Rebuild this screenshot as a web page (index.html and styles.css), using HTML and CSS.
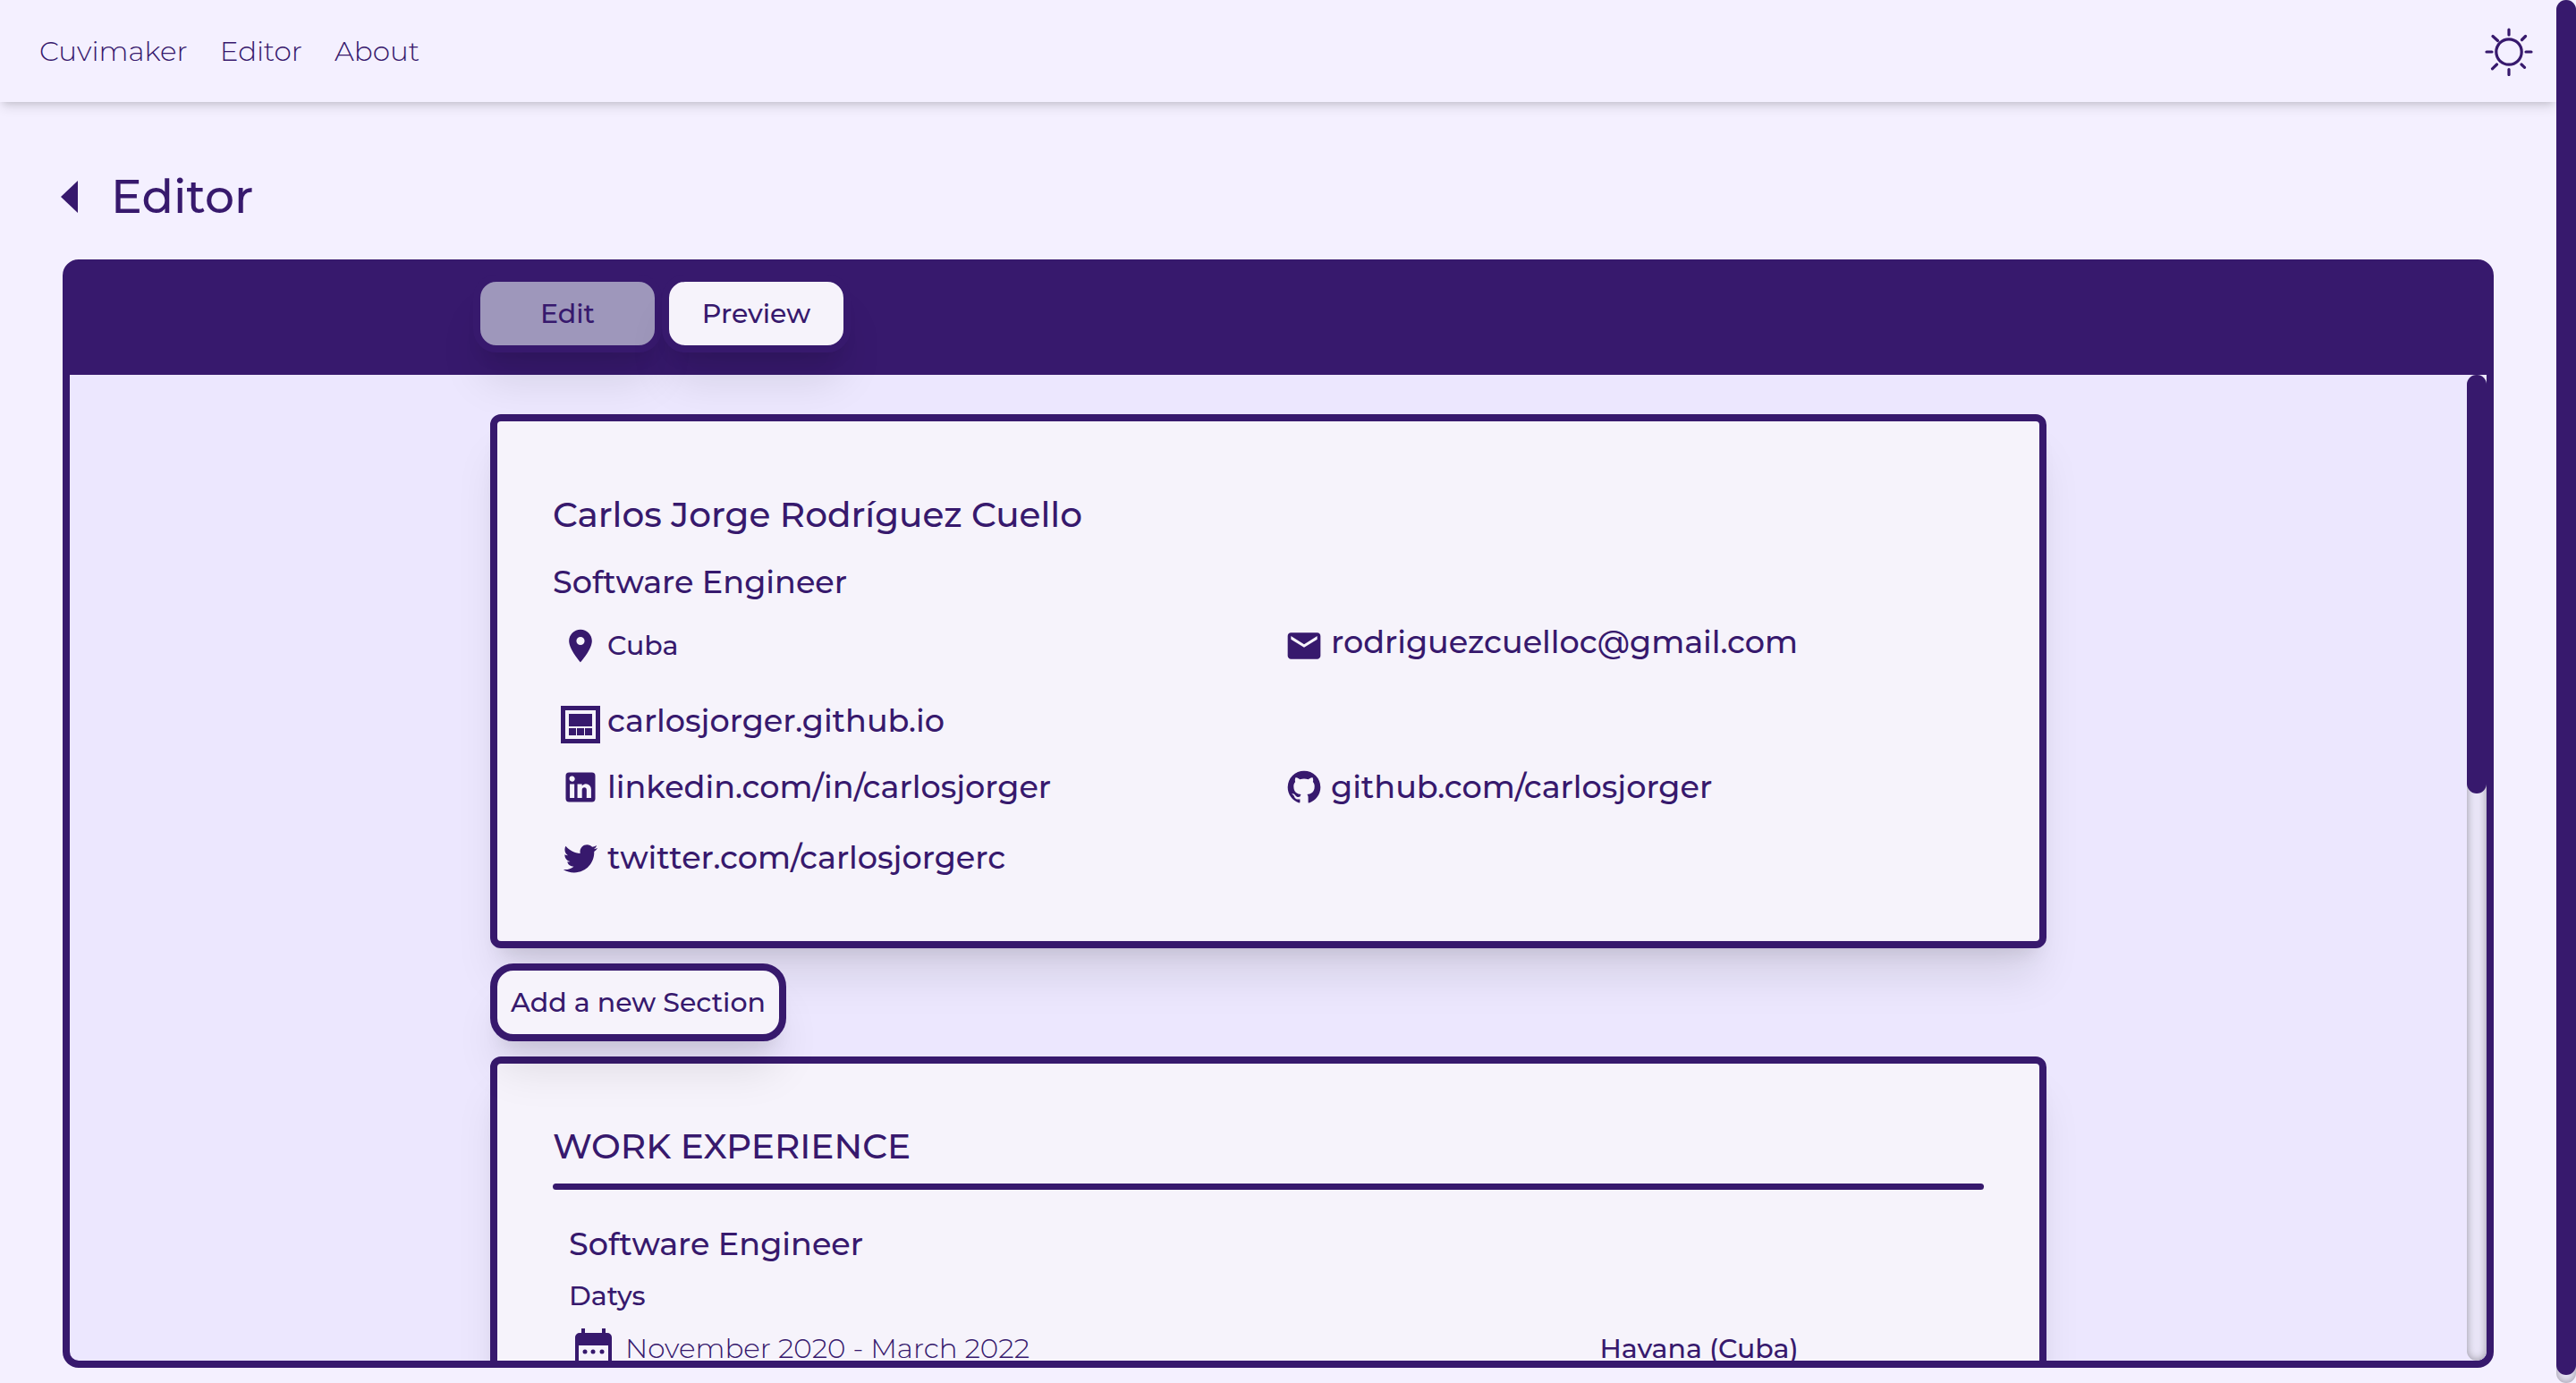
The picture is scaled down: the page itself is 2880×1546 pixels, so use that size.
FILE: index.html
```html
<!DOCTYPE html>
<html lang="en">
<head>
<meta charset="utf-8">
<meta name="viewport" content="width=device-width, initial-scale=1">
<title>Cuvimaker</title>
<link rel="stylesheet" href="styles.css">
</head>
<body class="app">
  <div class="page">
    <header class="topbar">
      <nav class="nav">
        <a class="nav-link" href="#home">Cuvimaker</a>
        <a class="nav-link" href="#editor">Editor</a>
        <a class="nav-link" href="#about">About</a>
      </nav>
      <button class="theme-toggle" type="button" aria-label="Toggle theme">
        <svg class="theme-icon" viewBox="-27 -27 54 54" fill="none" stroke="currentColor" stroke-width="3.2" stroke-linecap="round">
          <circle cx="0" cy="0" r="14.2"/>
          <path d="M0-25v6M0 19.500v6M-25 0h6M19 0h6M-18-17.500l5.500 5M14.500-13.500l4-4M-13.500 14l-5 4.800M14 14l3.500 3.300"/>
        </svg>
      </button>
    </header>
    <main class="editor">
      <div class="title-row">
        <a class="back" href="#home" aria-label="Back"><svg class="back-icon" viewBox="0 0 20 38"><path fill="currentColor" d="M0 19L19 1v36z"/></svg></a>
        <h1 class="title">Editor</h1>
      </div>
      <section class="panel">
        <div class="panel-head">
          <div class="tabs">
            <button class="btn tab tab-current" type="button" disabled>Edit</button>
            <button class="btn tab" type="button">Preview</button>
          </div>
        </div>
        <div class="panel-body">
          <div class="sheet">
            <article class="card card-profile">
              <h2 class="heading">Carlos Jorge Rodríguez Cuello</h2>
              <p class="subheading">Software Engineer</p>
              <ul class="contacts">
                <li class="contact contact-place">
                  <svg class="icon" viewBox="0 0 24 24"><path fill="currentColor" d="M12 2C8.130 2 5 5.130 5 9c0 5.250 7 13 7 13s7-7.750 7-13c0-3.870-3.130-7-7-7zm0 9.500a2.500 2.500 0 1 1 0-5 2.500 2.500 0 0 1 0 5z"/></svg>
                  <span>Cuba</span>
                </li>
                <li class="contact contact-high">
                  <svg class="icon" viewBox="0 0 24 24"><path fill="currentColor" d="M20 4H4c-1.100 0-2 .9-2 2v12c0 1.100.9 2 2 2h16c1.100 0 2-.9 2-2V6c0-1.100-.9-2-2-2zm0 4l-8 5-8-5V6l8 5 8-5v2z"/></svg>
                  <a href="mailto:rodriguezcuelloc@gmail.com">rodriguezcuelloc@gmail.com</a>
                </li>
                <li class="contact contact-high contact-first">
                  <svg class="icon" viewBox="0 0 44 44" fill="currentColor"><path fill-rule="evenodd" d="M0 1h44v42H0zM5 6v32h34V6z"/><path d="M9 10h26v14H9zM9 26h8v8H9zM18 26h8v8h-8zM27 26h8v8h-8z"/></svg>
                  <a href="https://carlosjorger.github.io">carlosjorger.github.io</a>
                </li>
                <li class="contact contact-first">
                  <svg class="icon" viewBox="0 0 24 24"><path fill="currentColor" d="M19 3a2 2 0 0 1 2 2v14a2 2 0 0 1-2 2H5a2 2 0 0 1-2-2V5a2 2 0 0 1 2-2h14m-.5 15.500v-5.300a3.260 3.260 0 0 0-3.260-3.260c-.85 0-1.840.52-2.320 1.300v-1.110h-2.790v8.370h2.790v-4.930c0-.77.62-1.400 1.390-1.400a1.400 1.400 0 0 1 1.400 1.400v4.930h2.790M6.880 8.560a1.680 1.680 0 0 0 1.680-1.680c0-.93-.75-1.690-1.680-1.690a1.690 1.690 0 0 0-1.690 1.690c0 .93.76 1.680 1.690 1.680m1.390 9.940v-8.370H5.500v8.370h2.770z"/></svg>
                  <a href="https://linkedin.com/in/carlosjorger">linkedin.com/in/carlosjorger</a>
                </li>
                <li class="contact">
                  <svg class="icon" viewBox="0 0 24 24"><path fill="currentColor" d="M12 2A10 10 0 0 0 2 12c0 4.420 2.870 8.170 6.840 9.500.5.080.66-.23.66-.5v-1.690c-2.770.6-3.360-1.340-3.360-1.340-.46-1.160-1.110-1.470-1.110-1.470-.91-.62.07-.6.07-.6 1 .07 1.530 1.030 1.530 1.030.87 1.520 2.340 1.070 2.910.83.09-.65.350-1.090.63-1.340-2.220-.25-4.550-1.110-4.550-4.920 0-1.110.38-2 1.030-2.710-.1-.25-.45-1.290.1-2.640 0 0 .84-.27 2.750 1.020.79-.22 1.650-.33 2.500-.33.85 0 1.710.11 2.500.33 1.910-1.290 2.750-1.020 2.750-1.020.55 1.350.2 2.390.1 2.640.65.71 1.030 1.600 1.030 2.710 0 3.820-2.340 4.660-4.570 4.910.36.31.69.92.69 1.850V21c0 .27.16.59.67.5C19.140 20.160 22 16.420 22 12A10 10 0 0 0 12 2z"/></svg>
                  <a href="https://github.com/carlosjorger">github.com/carlosjorger</a>
                </li>
                <li class="contact contact-first">
                  <svg class="icon" viewBox="0 0 24 24"><path fill="currentColor" d="M22.460 6c-.77.350-1.600.58-2.460.69.88-.53 1.560-1.370 1.880-2.380-.83.5-1.750.85-2.720 1.050C18.370 4.500 17.260 4 16 4c-2.350 0-4.270 1.920-4.270 4.290 0 .34.040.67.110.98C8.280 9.090 5.110 7.380 3 4.790c-.37.630-.58 1.370-.58 2.150 0 1.490.75 2.810 1.910 3.560-.71 0-1.370-.2-1.950-.5v.03c0 2.080 1.480 3.820 3.440 4.210a4.220 4.220 0 0 1-1.930.07 4.280 4.280 0 0 0 4 2.980 8.521 8.521 0 0 1-5.330 1.840c-.34 0-.68-.02-1.020-.06C3.440 20.290 5.700 21 8.120 21 16 21 20.330 14.460 20.330 8.790c0-.19 0-.37-.01-.56.84-.6 1.560-1.360 2.140-2.230z"/></svg>
                  <a href="https://twitter.com/carlosjorgerc">twitter.com/carlosjorgerc</a>
                </li>
              </ul>
            </article>
            <button class="btn btn-add" type="button">Add a new Section</button>
            <article class="card card-section">
              <h2 class="heading">WORK EXPERIENCE</h2>
              <hr class="rule">
              <div class="job">
                <h3 class="subheading">Software Engineer</h3>
                <p class="company">Datys</p>
                <div class="job-meta">
                  <div class="dates">
                    <svg class="icon-date" viewBox="0 0 54 54" fill="currentColor"><path fill-rule="evenodd" d="M14 5h4v5h19V5h4v5h2a5 5 0 0 1 5 5v31a5 5 0 0 1-5 5H12a5 5 0 0 1-5-5V15a5 5 0 0 1 5-5h2zM11 24v23h33V24z"/><circle cx="18" cy="31" r="2.500"/><circle cx="27" cy="31" r="2.500"/><circle cx="37" cy="31" r="2.500"/></svg>
                    <span>November 2020 - March 2022</span>
                  </div>
                  <span class="place">Havana (Cuba)</span>
                </div>
              </div>
            </article>
          </div>
          <div class="track"><div class="thumb" style="height: 42.5%"></div></div>
        </div>
      </section>
    </main>
  </div>
  <div class="track"><div class="thumb" style="height: 99.4%"></div></div>
</body>
</html>
```
FILE: styles.css
```css
:root {
  --ink: #37196d;
  --page: #f4f0ff;
  --panel: #ece7fe;
  --card: #f6f3fb;
  --shadow: 0 40px 50px -10px rgba(0, 0, 0, .1), 0 16px 20px -12px rgba(0, 0, 0, .1);
}
* { box-sizing: border-box; }
h1, h2, h3, p, ul { margin: 0; padding: 0; font-weight: 500; }
ul { list-style: none; }
a { color: inherit; text-decoration: none; }
button { font: inherit; color: inherit; }
svg { display: block; flex: none; }

.app {
  margin: 0;
  height: 100vh;
  display: flex;
  overflow: hidden;
  background: var(--page);
  color: var(--ink);
  font-family: Montserrat, Inter, sans-serif;
  font-size: 31px;
  font-weight: 400;
}
.page { flex: 1; min-width: 0; display: flex; flex-direction: column; }

.topbar {
  display: flex;
  align-items: center;
  justify-content: space-between;
  height: 114px;
  padding: 0 26px 0 44px;
  box-shadow: 0 8px 12px -2px rgba(0, 0, 0, .1), 0 4px 8px -4px rgba(0, 0, 0, .16);
}
.nav { display: flex; gap: 36px; font-weight: 300; }
.theme-toggle {
  padding: 2px 0 0;
  border: 0;
  background: none;
}
.theme-icon { width: 54px; height: 54px; }

.editor {
  flex: 1;
  min-height: 0;
  display: flex;
  flex-direction: column;
  padding: 70px 70px 17px;
}
.title-row { display: flex; align-items: center; gap: 36px; margin: 0 0 34px -2px; }
.back-icon { width: 20px; height: 38px; }
.title { font-size: 52px; line-height: 72px; }

.panel {
  flex: 1;
  min-height: 0;
  display: flex;
  flex-direction: column;
  border: 8px solid var(--ink);
  border-radius: 18px;
  background: var(--panel);
}
.panel-head { position: relative; z-index: 1; padding: 9px 0 25px; background: var(--ink); }
.tabs { display: flex; max-width: 1800px; margin: 0 auto; }
.btn {
  flex: none;
  height: 87px;
  padding: 0 15px;
  border: 8px solid var(--ink);
  border-radius: 26px;
  background: var(--card);
  box-shadow: var(--shadow);
  font-size: 30px;
  font-weight: 500;
}
.tab { width: 211px; }
.tab-current { background: #9e97bb; }

.panel-body { flex: 1; min-height: 0; display: flex; overflow: hidden; border-radius: 0 0 10px 10px; }
.sheet {
  flex: 1;
  display: flex;
  flex-direction: column;
  gap: 17px;
  max-width: 1740px;
  margin: 0 auto;
  padding-top: 44px;
}
.card {
  flex: none;
  padding: 80px 62px 71px;
  border: 8px solid var(--ink);
  border-radius: 12px;
  background: var(--card);
  box-shadow: var(--shadow);
}
.heading { font-size: 39px; line-height: 48px; }
.subheading { font-size: 35px; line-height: 44px; }
.card-profile .subheading { margin: 30px 0 27px; }

.contacts {
  display: grid;
  grid-template-columns: 1fr 1fr;
  grid-template-rows: 62px 44px 53px 44px;
  gap: 26px 18px;
  align-items: start;
  padding-left: 9px;
  margin-right: -9px;
  font-size: 35px;
  font-weight: 500;
  line-height: 44px;
}
.contact { display: flex; gap: 8px; }
.contact-first { grid-column: 1; }
.contact-high { line-height: 35px; }
.contact-place { font-size: 30px; }
.icon { width: 44px; height: 44px; }

.btn-add { position: relative; z-index: 1; align-self: flex-start; }

.card-section { padding-top: 68px; }
.rule { height: 7px; margin: 18px 0 39px; border: 0; border-radius: 4px; background: var(--ink); }
.job { padding: 0 18px; }
.company { margin: 14px 0 9px; font-size: 30px; line-height: 44px; }
.job-meta { display: grid; grid-template-columns: 14fr 5fr; align-items: center; }
.dates { display: flex; align-items: center; gap: 9px; font-weight: 300; }
.icon-date { width: 54px; height: 54px; }
.place { font-size: 30px; font-weight: 500; }

.track {
  flex: none;
  width: 22px;
  border-radius: 11px;
  background: #e9e5f7;
  box-shadow: inset 0 0 10px rgba(0, 0, 0, .35);
}
.thumb { border-radius: 11px; background: var(--ink); }
```
